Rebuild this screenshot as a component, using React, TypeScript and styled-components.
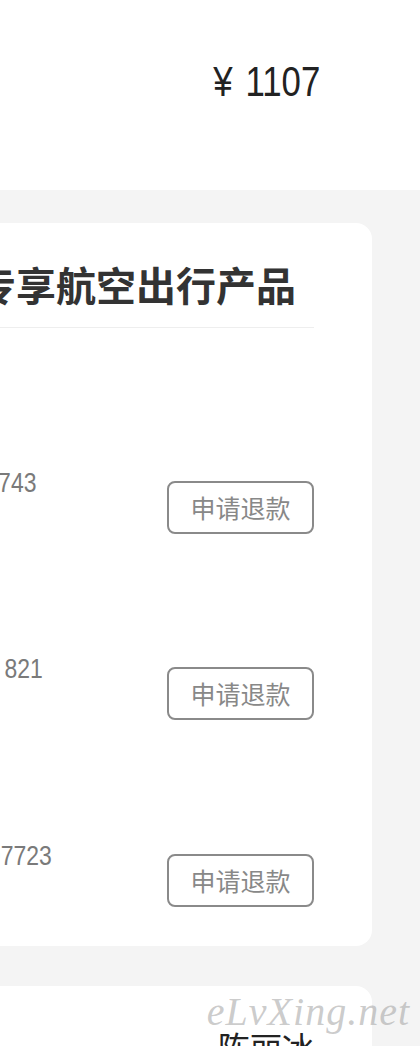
import React from "react";
import styled, { createGlobalStyle } from "styled-components";

const GlobalStyle = createGlobalStyle`
  html, body {
    margin: 0;
    padding: 0;
    background: #f4f4f4;
    overflow-x: hidden;
  }
  body {
    font-family: "Liberation Sans", "Noto Sans CJK SC", sans-serif;
  }
`;

const Page = styled.div`
  position: relative;
  width: 750px;
  margin-left: -330px;
`;

const Header = styled.header`
  height: 190px;
  box-sizing: border-box;
  background: #ffffff;
  display: flex;
  justify-content: space-between;
  align-items: flex-start;
  padding: 60px 100px 0 48px;
`;

const HeaderLabel = styled.span`
  font-family: "Noto Sans CJK SC", sans-serif;
  font-size: 30px;
  line-height: 43px;
  color: #333333;
`;

/* narrow numerals, as in the reference's condensed face */
const Price = styled.span`
  display: inline-block;
  font-family: "Liberation Sans", sans-serif;
  font-size: 43px;
  line-height: 1;
  color: #222222;
  transform: scaleX(0.81);
  transform-origin: right center;
`;

const Yen = styled.span`
  margin-right: 4px;
`;

const Content = styled.main`
  display: flex;
  flex-direction: column;
  gap: 40px;
  padding: 33px 48px 40px;
`;

const Card = styled.section<{ $pt: number }>`
  background: #ffffff;
  border-radius: 16px;
  padding: ${(p) => p.$pt}px 58px 0 58px;
`;

const CardTitle = styled.h2`
  margin: 0 0 58px;
  padding-bottom: 23px;
  border-bottom: 1px solid #eeeeee;
  font-family: "Noto Sans CJK SC", sans-serif;
  font-size: 40px;
  line-height: 40px;
  font-weight: 700;
  color: #333333;
  white-space: nowrap;
`;

const Row = styled.div`
  height: 186.67px;
  box-sizing: border-box;
  padding-bottom: 39px;
  display: flex;
  justify-content: space-between;
  align-items: flex-end;
`;

const Info = styled.div`
  display: flex;
  flex-direction: column;
  align-items: flex-start;
`;

const Name = styled.span`
  font-family: "Noto Sans CJK SC", sans-serif;
  font-size: 30px;
  line-height: 40px;
  color: #333333;
`;

const Number = styled.span`
  display: inline-block;
  font-family: "Liberation Sans", "Noto Sans CJK SC", sans-serif;
  font-size: 28px;
  line-height: 30px;
  color: #7a7a7a;
  white-space: pre;
  transform: scaleX(0.82);
  transform-origin: left center;
`;

const Sub = styled.span`
  font-family: "Noto Sans CJK SC", sans-serif;
  font-size: 24px;
  line-height: 36px;
  color: #999999;
`;

const RefundButton = styled.button`
  width: 147px;
  height: 53px;
  box-sizing: border-box;
  border: 2px solid #8a8a8a;
  border-radius: 8px;
  background: #ffffff;
  color: #888888;
  font-family: "Noto Sans CJK SC", sans-serif;
  font-size: 25px;
  line-height: 1;
  padding: 0;
  display: flex;
  align-items: center;
  justify-content: center;
`;

const InfoRow = styled.div`
  display: flex;
  justify-content: space-between;
  align-items: center;
  font-family: "Noto Sans CJK SC", sans-serif;
  font-size: 32px;
  line-height: 48px;
  color: #222222;
  padding-bottom: 20px;
`;

const Label = styled.span`
  color: #666666;
`;

const Watermark = styled.div`
  position: absolute;
  top: 988px;
  right: 10px;
  font-family: "Liberation Serif", serif;
  font-style: italic;
  font-size: 40px;
  letter-spacing: 1px;
  color: rgba(160, 160, 160, 0.55);
  pointer-events: none;
`;

const tickets = [
  { name: "陈丽冰", no: "票号：781234567898743", flight: "MU5137" },
  { name: "陈丽冰", no: "票号：781 2345 6789 821", flight: "MU5138" },
  { name: "陈丽冰", no: "票号：781-234567-897723", flight: "MU5139" },
];

export default function App() {
  return (
    <>
      <GlobalStyle />
      <Page>
        <Header>
          <HeaderLabel>订单总额</HeaderLabel>
          <Price>
            <Yen>¥</Yen> 1107
          </Price>
        </Header>
        <Content>
          <Card $pt={41}>
            <CardTitle>您已购买的专享航空出行产品</CardTitle>
            {tickets.map((t, i) => (
              <Row key={i}>
                <Info>
                  <Name>{t.name}</Name>
                  <Number>{t.no}</Number>
                  <Sub>{t.flight}</Sub>
                </Info>
                <RefundButton>申请退款</RefundButton>
              </Row>
            ))}
          </Card>
          <Card $pt={36}>
            <InfoRow>
              <Label>乘机人</Label>
              <span>陈丽冰</span>
            </InfoRow>
            <InfoRow>
              <Label>证件号</Label>
              <span>110***********1234</span>
            </InfoRow>
          </Card>
        </Content>
        <Watermark>eLvXing.net</Watermark>
      </Page>
    </>
  );
}
